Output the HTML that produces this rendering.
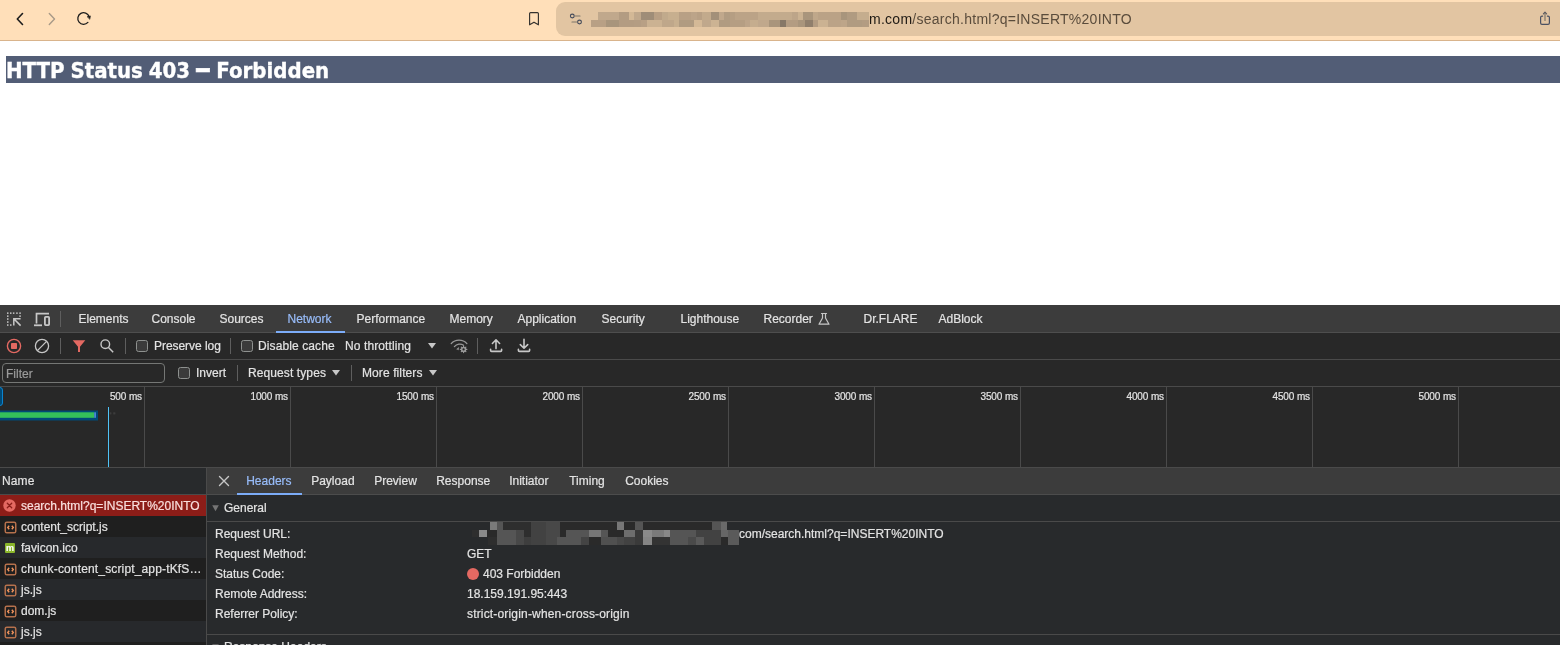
<!DOCTYPE html>
<html lang="en">
<head>
<meta charset="utf-8">
<title>HTTP Status 403 – Forbidden</title>
<style>
*{box-sizing:border-box;margin:0;padding:0}
html,body{width:1560px;height:645px;overflow:hidden;background:#fff}
body{position:relative;will-change:transform;font-family:"Liberation Sans",sans-serif;font-size:12px;color:#e3e3e3}
.abs{position:absolute}
/* browser chrome */
#chrome{position:absolute;left:0;top:0;width:1560px;height:41px;background:#ffdfb9;border-bottom:1px solid #d9b48c}
#urlbar{position:absolute;left:556px;top:2px;width:1030px;height:34px;background:#e2c5a2;border-radius:9px}
#url{position:absolute;left:869px;top:11px;font-size:14px;line-height:16px;color:#5a4c3c;white-space:nowrap;letter-spacing:0.26px}
#url b{font-weight:normal;color:#1f1a14}
/* page */
#h1{position:absolute;left:6px;top:56px;width:1554px;height:27px;background:#525d76;color:#fff;font-family:"DejaVu Sans Condensed","DejaVu Sans","Liberation Sans",sans-serif;font-weight:bold;font-size:22px;line-height:27px;white-space:nowrap}
#h1 span{display:inline-block;position:relative;top:1px;word-spacing:-1px;-webkit-text-stroke:0.35px #fff}
#h1 i{display:inline-block;font-style:normal;margin:0 2.3px 0 2.3px;transform:translateY(-2.5px) scale(1.74,1.35)}
/* devtools */
#dt{-webkit-text-stroke:0.2px;position:absolute;left:0;top:305px;width:1560px;height:340px;background:#282828;overflow:hidden}
#tabs{position:absolute;left:0;top:0;width:1560px;height:28px;background:#3c3c3c;border-bottom:1px solid #4e4e4e}
.tab{position:absolute;top:1px;height:27px;line-height:27px;font-size:12px;color:#e3e3e3;white-space:nowrap}
.tab.sel{color:#98bcf9}
#toolbar{position:absolute;left:0;top:28px;width:1560px;height:27px;background:#282828;border-bottom:1px solid #4a4a4a}
#filterbar{position:absolute;left:0;top:55px;width:1560px;height:27px;background:#282828;border-bottom:1px solid #4a4a4a}
.lbl{position:absolute;font-size:12px;line-height:14px;color:#e3e3e3;white-space:nowrap;letter-spacing:0.1px}
.cb{position:absolute;width:12px;height:12px;border:1px solid #8e918f;border-radius:2.5px;background:#3b3b3b}
.vsep{position:absolute;width:1px;height:16px;background:#5e5e5e}
#filter{position:absolute;left:2px;top:3px;width:163px;height:20px;border:1px solid #757775;border-radius:4px;background:#282828}
#filter span{position:absolute;left:3px;top:3px;font-size:12px;line-height:14px;color:#9a9a9a}
/* overview */
#ov{position:absolute;left:0;top:82px;width:1560px;height:80px;background:#282828}
.tick{position:absolute;top:0;width:1px;height:80px;background:#4a4a4a}
.tl{position:absolute;top:4px;letter-spacing:-0.12px;font-size:10px;line-height:12px;color:#e3e3e3;text-align:right;width:60px;white-space:nowrap}
/* lower */
#names{position:absolute;left:0;top:162px;width:206px;height:178px;background:#282828}
#nhead{position:absolute;left:0;top:0;width:206px;height:28px;background:#282a2c;border-top:1px solid #4a4a4a;border-bottom:1px solid #4a4a4a}
.row{position:absolute;left:0;width:206px;height:21px;white-space:nowrap;overflow:hidden}
.row span{position:absolute;left:21px;top:4px;font-size:12px;line-height:14px;color:#e3e3e3}
.row{background:#27292c}
.row.odd{background:#1f1f1f}
.row.sel{background:#8c1d18}
.row.sel span{color:#f9dedc}
#detail{position:absolute;left:206px;top:162px;width:1354px;height:178px;background:#282a2c;border-left:1px solid #4a4a4a}
#dtabs{position:absolute;left:0;top:0;width:1354px;height:28px;background:#3c3c3c;border-top:1px solid #4a4a4a;border-bottom:1px solid #4c4c4c}
.k{position:absolute;left:8px;font-size:12px;line-height:14px;color:#e3e3e3;white-space:nowrap}
.v{position:absolute;left:260px;font-size:12px;line-height:14px;color:#e3e3e3;white-space:nowrap}
</style>
</head>
<body>
<div id="chrome">
  <svg class="abs" style="left:0;top:0" width="120" height="40" viewBox="0 0 120 40" fill="none" stroke-linecap="round" stroke-linejoin="round">
    <path d="M22.5 13.5 L17.3 19 L22.5 24.5" stroke="#1c1c1c" stroke-width="1.6"/>
    <path d="M49.3 13.5 L54.5 19 L49.3 24.5" stroke="#a89a88" stroke-width="1.4"/>
    <path d="M89.1 16.6 A5.8 5.8 0 1 0 87.9 22.4" stroke="#1c1c1c" stroke-width="1.3"/>
    <path d="M87.4 16.6 L90.4 15.9 L89.9 19 Z" fill="#1c1c1c" stroke="#1c1c1c" stroke-width="0.6"/>
  </svg>
  <svg class="abs" style="left:524px;top:8px" width="20" height="22" viewBox="0 0 20 22" fill="none" stroke="#34312e" stroke-width="1.15" stroke-linejoin="round">
    <path d="M5.6 5.6 Q5.6 4.6 6.6 4.6 H13.4 Q14.4 4.6 14.4 5.6 V16.8 L10 14.2 L5.6 16.8 Z"/>
  </svg>
  <div id="urlbar"></div>
  <svg class="abs" style="left:566px;top:10px" width="20" height="18" viewBox="0 0 20 18" fill="none" stroke="#434a5a" stroke-width="1.1" stroke-linecap="round">
    <circle cx="6.3" cy="6" r="1.9"/><path d="M9.2 6 H14" stroke="#7d766b" stroke-width="1.2"/>
    <circle cx="13.5" cy="12" r="1.9"/><path d="M6 12 H10.6" stroke="#7d766b" stroke-width="1.2"/>
  </svg>
  <svg class="abs" style="left:0;top:0" width="1560" height="40" viewBox="0 0 1560 40" shape-rendering="crispEdges"><rect x="598.0" y="12" width="21.1" height="8" fill="#c0a88c"/><rect x="619.1" y="12" width="9.8" height="8" fill="#b39c82"/><rect x="628.9" y="12" width="5.1" height="8" fill="#d3b896"/><rect x="634.0" y="12" width="7.1" height="8" fill="#c0a88c"/><rect x="641.1" y="12" width="12.9" height="8" fill="#9f8d78"/><rect x="654.0" y="12" width="7.9" height="8" fill="#b89f84"/><rect x="661.9" y="12" width="6.3" height="8" fill="#c1aa8c"/><rect x="668.2" y="12" width="10.6" height="8" fill="#c7af8f"/><rect x="678.8" y="12" width="12.0" height="8" fill="#b8a085"/><rect x="690.8" y="12" width="6.2" height="8" fill="#bca489"/><rect x="697.0" y="12" width="5.1" height="8" fill="#b8a085"/><rect x="702.1" y="12" width="8.9" height="8" fill="#c2aa8c"/><rect x="711.0" y="12" width="7.9" height="8" fill="#a39079"/><rect x="718.9" y="12" width="5.0" height="8" fill="#c0a88c"/><rect x="723.9" y="12" width="6.3" height="8" fill="#b19c82"/><rect x="591.0" y="20" width="15.0" height="7" fill="#b8a085"/><rect x="606.0" y="20" width="13.1" height="7" fill="#a8957c"/><rect x="619.1" y="20" width="14.9" height="7" fill="#b39c82"/><rect x="634.0" y="20" width="7.1" height="7" fill="#b49d83"/><rect x="641.1" y="20" width="5.9" height="7" fill="#b8a085"/><rect x="647.0" y="20" width="14.9" height="7" fill="#cbb292"/><rect x="661.9" y="20" width="12.0" height="7" fill="#bfa78a"/><rect x="673.9" y="20" width="4.9" height="7" fill="#c7af8f"/><rect x="678.8" y="20" width="15.0" height="7" fill="#b09b81"/><rect x="693.8" y="20" width="8.3" height="7" fill="#d4b997"/><rect x="702.1" y="20" width="8.9" height="7" fill="#c0a88c"/><rect x="711.0" y="20" width="7.9" height="7" fill="#ccb393"/><rect x="718.9" y="20" width="11.3" height="7" fill="#b09b81"/><rect x="730.0" y="12" width="4.8" height="8" fill="#b59e83"/><rect x="734.8" y="12" width="23.1" height="8" fill="#bba387"/><rect x="757.9" y="12" width="34.1" height="8" fill="#c3ab8d"/><rect x="792.0" y="12" width="6.1" height="8" fill="#bda589"/><rect x="798.1" y="12" width="5.0" height="8" fill="#cbb292"/><rect x="803.1" y="12" width="9.8" height="8" fill="#a9957c"/><rect x="812.9" y="12" width="5.1" height="8" fill="#bfa78a"/><rect x="818.0" y="12" width="23.1" height="8" fill="#baa286"/><rect x="841.1" y="12" width="6.0" height="8" fill="#a8957c"/><rect x="847.1" y="12" width="9.8" height="8" fill="#b09b81"/><rect x="856.9" y="12" width="12.0" height="8" fill="#c5ad8e"/><rect x="730.0" y="20" width="14.9" height="7" fill="#b59e83"/><rect x="744.9" y="20" width="5.1" height="7" fill="#bca489"/><rect x="750.0" y="20" width="7.9" height="7" fill="#c5ad8e"/><rect x="757.9" y="20" width="11.0" height="7" fill="#c0a88c"/><rect x="768.9" y="20" width="11.1" height="7" fill="#a9957c"/><rect x="780.0" y="20" width="6.1" height="7" fill="#877867"/><rect x="786.1" y="20" width="12.0" height="7" fill="#b39c82"/><rect x="798.1" y="20" width="6.9" height="7" fill="#a9957c"/><rect x="805.0" y="20" width="7.9" height="7" fill="#907f6c"/><rect x="812.9" y="20" width="5.1" height="7" fill="#b39c82"/><rect x="818.0" y="20" width="9.9" height="7" fill="#cbb292"/><rect x="827.9" y="20" width="13.2" height="7" fill="#bba387"/><rect x="841.1" y="20" width="6.0" height="7" fill="#bda589"/><rect x="847.1" y="20" width="14.6" height="7" fill="#b09b81"/><rect x="861.7" y="20" width="7.2" height="7" fill="#b39c82"/></svg>
  <div id="url"><b>m.com</b>/search.html?q=INSERT%20INTO</div>
  <svg class="abs" style="left:1536px;top:9px" width="18" height="20" viewBox="0 0 18 20" fill="none" stroke="#4b5162" stroke-width="1.2" stroke-linecap="round" stroke-linejoin="round">
    <path d="M6.6 7.2 H6 Q4.6 7.2 4.6 8.6 V14 Q4.6 15.4 6 15.4 H12 Q13.4 15.4 13.4 14 V8.6 Q13.4 7.2 12 7.2 H11.4"/><path d="M9 11.4 V3.6" stroke="#7d766c"/><path d="M7.4 4.8 L9 3.2 L10.6 4.8" stroke="#5b5a60"/>
  </svg>
</div>

<div id="h1"><span>HTTP Status 403 <i>–</i> Forbidden</span></div>

<div id="dt">
  <div id="tabs">
    <svg class="abs" style="left:4px;top:4px" width="52" height="20" viewBox="0 0 52 20" fill="none" stroke="#c7c7c7" stroke-width="1.3">
      <g fill="#c7c7c7" stroke="none"><rect x="3.0" y="3.4" width="1.5" height="1.5"/><rect x="6.0" y="3.4" width="1.5" height="1.5"/><rect x="8.9" y="3.4" width="1.5" height="1.5"/><rect x="12.2" y="3.4" width="1.5" height="1.5"/><rect x="15.3" y="3.4" width="1.5" height="1.5"/><rect x="3.0" y="6.4" width="1.5" height="1.5"/><rect x="3.0" y="9.3" width="1.5" height="1.5"/><rect x="3.0" y="12.3" width="1.5" height="1.5"/><rect x="3.0" y="15.3" width="1.5" height="1.5"/><rect x="15.3" y="6.4" width="1.5" height="1.5"/><rect x="6.0" y="15.3" width="1.5" height="1.5"/></g>
      <path d="M16.6 16.6 L9.8 9.8 M9.8 16.6 V9.8 H16.6" stroke-width="1.5"/>
      <path d="M32.5 14.5 V4.6 H45" stroke-width="1.7"/><path d="M30 16.3 H38" stroke-width="1.8"/><rect x="40.9" y="7.9" width="4.2" height="8.2" rx="0.8" stroke-width="1.8"/>
    </svg>
    <div class="vsep" style="left:60px;top:6px"></div>
    <div class="tab" style="left:78.5px">Elements</div><div class="tab" style="left:151.5px">Console</div><div class="tab" style="left:219.5px">Sources</div><div class="tab sel" style="left:287.5px">Network</div><div class="tab" style="left:356.5px">Performance</div><div class="tab" style="left:449.5px">Memory</div><div class="tab" style="left:517.5px">Application</div><div class="tab" style="left:601.5px">Security</div><div class="tab" style="left:680.5px">Lighthouse</div><div class="tab" style="left:763.5px">Recorder</div><div class="tab" style="left:863.5px">Dr.FLARE</div><div class="tab" style="left:938.5px">AdBlock</div>
    <div class="abs" style="left:276px;top:25.5px;width:69px;height:2.5px;background:#7cacf8"></div>
    <svg class="abs" style="left:816px;top:6px" width="16" height="16" viewBox="0 0 16 16" fill="none" stroke="#c7c7c7" stroke-width="1.2" stroke-linejoin="round" stroke-linecap="round">
      <path d="M5.5 2.5 H10.5 M6.5 2.5 V7 L3 13.2 H13 L9.5 7 V2.5"/>
    </svg>
  </div>
  <div id="toolbar">
    <svg class="abs" style="left:4px;top:3px" width="120" height="20" viewBox="0 0 120 20" fill="none">
      <circle cx="10" cy="10" r="6.6" stroke="#e46962" stroke-width="1.4"/><rect x="7" y="7" width="6" height="6" rx="0.8" fill="#e46962"/>
      <circle cx="38" cy="10" r="6.6" stroke="#c7c7c7" stroke-width="1.3"/><path d="M33.4 14.6 L42.6 5.4" stroke="#c7c7c7" stroke-width="1.3"/>
      <path d="M68.7 4.3 H81.3 L76 10.8 V16 H74 V10.8 Z" fill="#e46962"/>
      <circle cx="101.3" cy="8.2" r="4.3" stroke="#c7c7c7" stroke-width="1.4"/><path d="M104.5 11.5 L109.2 16.2" stroke="#c7c7c7" stroke-width="1.5"/>
    </svg>
    <div class="vsep" style="left:60px;top:5px"></div>
    <div class="vsep" style="left:125px;top:5px"></div>
    <div class="cb" style="left:136px;top:7px"></div>
    <div class="lbl" style="left:154px;top:6px;letter-spacing:-0.05px">Preserve log</div>
    <div class="vsep" style="left:230px;top:5px"></div>
    <div class="cb" style="left:241px;top:7px"></div>
    <div class="lbl" style="left:258px;top:6px">Disable cache</div>
    <div class="lbl" style="left:345px;top:6px">No throttling</div>
    <svg class="abs" style="left:428px;top:10px" width="8" height="6" viewBox="0 0 8 6"><path d="M0 0 H8 L4.0 5.4 Z" fill="#c7c7c7"/></svg>
    <svg class="abs" style="left:449px;top:3px" width="22" height="20" viewBox="0 0 22 20" fill="none" stroke="#9a9a9a" stroke-width="1.3" stroke-linecap="round">
      <path d="M2.2 7.6 A10.5 10.5 0 0 1 17.9 7.6"/><path d="M5.4 10.6 A7 7 0 0 1 14.6 9.2"/><path d="M8 13 L9.6 11.6 V13.4 Z" fill="#9a9a9a" stroke-width="0.6"/>
      <circle cx="14.6" cy="13.4" r="1.9" stroke-width="1.5"/><path d="M14.6 10.2 V11 M14.6 15.8 V16.6 M11.4 13.4 H12.2 M17 13.4 H17.8 M12.3 11.1 L12.9 11.7 M16.3 15.1 L16.9 15.7 M12.3 15.7 L12.9 15.1 M16.3 11.7 L16.9 11.1" stroke-width="1.2"/>
    </svg>
    <div class="vsep" style="left:477px;top:5px"></div>
    <svg class="abs" style="left:486px;top:3px" width="50" height="20" viewBox="0 0 50 20" fill="none" stroke="#c7c7c7" stroke-width="1.6" stroke-linecap="round" stroke-linejoin="round">
      <path d="M10 12.6 V4.2 M6.4 7.5 L10 3.8 L13.6 7.5"/><path d="M4.6 13.2 V14.4 Q4.6 15.4 5.6 15.4 H14.6 Q15.6 15.4 15.6 14.4 V13.2"/>
      <path d="M38 3.2 V11.6 M34.3 8.6 L38 12.2 L41.7 8.6"/><path d="M32.4 13.2 V14.4 Q32.4 15.4 33.4 15.4 H42.6 Q43.6 15.4 43.6 14.4 V13.2"/>
    </svg>
  </div>
  <div id="filterbar">
    <div id="filter"><span>Filter</span></div>
    <div class="cb" style="left:178px;top:7px"></div>
    <div class="lbl" style="left:196px;top:6px;letter-spacing:0">Invert</div>
    <div class="vsep" style="left:237px;top:5px"></div>
    <div class="lbl" style="left:248px;top:6px">Request types</div>
    <svg class="abs" style="left:332px;top:10px" width="8" height="6" viewBox="0 0 8 6"><path d="M0 0 H8 L4.0 5.4 Z" fill="#c7c7c7"/></svg>
    <div class="vsep" style="left:351px;top:5px"></div>
    <div class="lbl" style="left:362px;top:6px">More filters</div>
    <svg class="abs" style="left:429px;top:10px" width="8" height="6" viewBox="0 0 8 6"><path d="M0 0 H8 L4.0 5.4 Z" fill="#c7c7c7"/></svg>
  </div>
  <div id="ov"><div class="tick" style="left:144px"></div><div class="tl" style="left:82px">500 ms</div><div class="tick" style="left:290px"></div><div class="tl" style="left:228px">1000 ms</div><div class="tick" style="left:436px"></div><div class="tl" style="left:374px">1500 ms</div><div class="tick" style="left:582px"></div><div class="tl" style="left:520px">2000 ms</div><div class="tick" style="left:728px"></div><div class="tl" style="left:666px">2500 ms</div><div class="tick" style="left:874px"></div><div class="tl" style="left:812px">3000 ms</div><div class="tick" style="left:1020px"></div><div class="tl" style="left:958px">3500 ms</div><div class="tick" style="left:1166px"></div><div class="tl" style="left:1104px">4000 ms</div><div class="tick" style="left:1312px"></div><div class="tl" style="left:1250px">4500 ms</div><div class="tick" style="left:1458px"></div><div class="tl" style="left:1396px">5000 ms</div><div class="abs" style="left:-3px;top:0;width:6px;height:19px;border:1px solid #0b84d0;border-radius:3px;background:#004a77"></div>
    <svg class="abs" style="left:0;top:20px" width="120" height="16" viewBox="0 0 120 16">
      <rect x="0" y="3.5" width="98" height="10" fill="#004a77"/><rect x="0" y="5.3" width="94.2" height="5.5" fill="#34c05a"/><rect x="94.2" y="5.3" width="1.8" height="5.5" fill="#4a86d8"/>
      <rect x="109.8" y="5.3" width="1.6" height="2.1" fill="#3c3c3c"/><rect x="113.2" y="5.3" width="2.2" height="2.1" fill="#3c3c3c"/>
    </svg>
    <div class="abs" style="left:108px;top:20px;width:1px;height:60px;background:#4fc3f7"></div>
    
  </div>
  <div id="names"><div id="nhead"><div class="lbl" style="left:2px;top:6px">Name</div></div><div class="row sel" style="top:28px"><svg class="abs" style="left:2.2px;top:3px" width="15" height="15" viewBox="0 0 15 15"><circle cx="7.5" cy="7.5" r="6.2" fill="#e46962"/><path d="M5.3 5.3 L9.7 9.7 M9.7 5.3 L5.3 9.7" stroke="#8c1d18" stroke-width="1.3" stroke-linecap="round"/></svg><span>search.html?q=INSERT%20INTO</span></div><div class="row odd" style="top:49px"><svg class="abs" style="left:3.7px;top:4.8px" width="13" height="13" viewBox="0 0 13 13" fill="none"><rect x="1.25" y="1.25" width="10.5" height="10.5" rx="1.6" stroke="#b5714c" stroke-width="1.5"/><path d="M5.2 4.7 L3.7 6.5 L5.2 8.3 M7.8 4.7 L9.3 6.5 L7.8 8.3" stroke="#f0935c" stroke-width="1.4"/></svg><span>content_script.js</span></div><div class="row" style="top:70px"><div class="abs" style="left:5px;top:6px;width:10px;height:10px;background:#8ab52a;border-radius:1px;color:#fff;font-size:9px;line-height:10px;font-weight:bold;text-align:center">m</div><span>favicon.ico</span></div><div class="row odd" style="top:91px"><svg class="abs" style="left:3.7px;top:4.8px" width="13" height="13" viewBox="0 0 13 13" fill="none"><rect x="1.25" y="1.25" width="10.5" height="10.5" rx="1.6" stroke="#b5714c" stroke-width="1.5"/><path d="M5.2 4.7 L3.7 6.5 L5.2 8.3 M7.8 4.7 L9.3 6.5 L7.8 8.3" stroke="#f0935c" stroke-width="1.4"/></svg><span style="letter-spacing:0.15px">chunk-content_script_app-tKfS…</span></div><div class="row" style="top:112px"><svg class="abs" style="left:3.7px;top:4.8px" width="13" height="13" viewBox="0 0 13 13" fill="none"><rect x="1.25" y="1.25" width="10.5" height="10.5" rx="1.6" stroke="#b5714c" stroke-width="1.5"/><path d="M5.2 4.7 L3.7 6.5 L5.2 8.3 M7.8 4.7 L9.3 6.5 L7.8 8.3" stroke="#f0935c" stroke-width="1.4"/></svg><span>js.js</span></div><div class="row odd" style="top:133px"><svg class="abs" style="left:3.7px;top:4.8px" width="13" height="13" viewBox="0 0 13 13" fill="none"><rect x="1.25" y="1.25" width="10.5" height="10.5" rx="1.6" stroke="#b5714c" stroke-width="1.5"/><path d="M5.2 4.7 L3.7 6.5 L5.2 8.3 M7.8 4.7 L9.3 6.5 L7.8 8.3" stroke="#f0935c" stroke-width="1.4"/></svg><span>dom.js</span></div><div class="row" style="top:154px"><svg class="abs" style="left:3.7px;top:4.8px" width="13" height="13" viewBox="0 0 13 13" fill="none"><rect x="1.25" y="1.25" width="10.5" height="10.5" rx="1.6" stroke="#b5714c" stroke-width="1.5"/><path d="M5.2 4.7 L3.7 6.5 L5.2 8.3 M7.8 4.7 L9.3 6.5 L7.8 8.3" stroke="#f0935c" stroke-width="1.4"/></svg><span>js.js</span></div><div class="row odd" style="top:175px"></div></div>
  <div id="detail"><div id="dtabs"><svg class="abs" style="left:10px;top:6px" width="14" height="14" viewBox="0 0 14 14" stroke="#c7c7c7" stroke-width="1.4" stroke-linecap="round"><path d="M2.5 2.5 L11.5 11.5 M11.5 2.5 L2.5 11.5"/></svg><div class="tab sel" style="left:39.2px;top:0">Headers</div><div class="tab" style="left:104.2px;top:0">Payload</div><div class="tab" style="left:167.2px;top:0">Preview</div><div class="tab" style="left:229.2px;top:0">Response</div><div class="tab" style="left:302.2px;top:0">Initiator</div><div class="tab" style="left:362.2px;top:0">Timing</div><div class="tab" style="left:418.2px;top:0">Cookies</div><div class="abs" style="left:30px;top:24.5px;width:65px;height:2.5px;background:#7cacf8"></div></div><div class="abs" style="left:0;top:28px;width:1354px;height:27px;border-bottom:1px solid #4a4a4a"></div>
    <svg class="abs" style="left:5.2px;top:38.3px" width="7" height="7" viewBox="0 0 7 7"><path d="M0.2 0.3 H6.8 L3.5 6.3 Z" fill="#757575"/></svg>
    <div class="k" style="left:17px;top:34px">General</div>
    <svg class="abs" style="left:-207px;top:-467px" width="1560" height="645" viewBox="0 0 1560 645" shape-rendering="crispEdges"><rect x="489.8" y="522" width="7.3" height="8" fill="#7a7a7a"/><rect x="497.1" y="522" width="5.6" height="8" fill="#555"/><rect x="502.7" y="522" width="28.5" height="8" fill="#2e2e2e"/><rect x="531.2" y="522" width="14.4" height="8" fill="#424242"/><rect x="545.6" y="522" width="14.4" height="8" fill="#484848"/><rect x="560.0" y="522" width="56.7" height="8" fill="#2a2a2a"/><rect x="616.7" y="522" width="7.1" height="8" fill="#777"/><rect x="623.8" y="522" width="11.2" height="8" fill="#2a2a2a"/><rect x="635.0" y="522" width="7.7" height="8" fill="#555"/><rect x="642.7" y="522" width="69.2" height="8" fill="#2a2a2a"/><rect x="711.9" y="522" width="8.7" height="8" fill="#555"/><rect x="720.6" y="522" width="6.7" height="8" fill="#6a6a6a"/><rect x="471.5" y="530" width="7.7" height="7" fill="#2e2e2e"/><rect x="479.2" y="530" width="7.7" height="7" fill="#8a8a8a"/><rect x="486.9" y="530" width="9.6" height="7" fill="#2a2a2a"/><rect x="496.5" y="530" width="19.3" height="7" fill="#555"/><rect x="515.8" y="530" width="8.6" height="7" fill="#484848"/><rect x="524.4" y="530" width="6.8" height="7" fill="#2e2e2e"/><rect x="531.2" y="530" width="14.4" height="7" fill="#424242"/><rect x="545.6" y="530" width="14.4" height="7" fill="#484848"/><rect x="560.0" y="530" width="5.8" height="7" fill="#2a2a2a"/><rect x="565.8" y="530" width="23.0" height="7" fill="#555"/><rect x="588.8" y="530" width="12.5" height="7" fill="#777"/><rect x="601.3" y="530" width="6.8" height="7" fill="#555"/><rect x="608.1" y="530" width="15.4" height="7" fill="#2a2a2a"/><rect x="623.5" y="530" width="11.5" height="7" fill="#6e6e6e"/><rect x="635.0" y="530" width="7.7" height="7" fill="#3a3a3a"/><rect x="642.7" y="530" width="9.6" height="7" fill="#8a8a8a"/><rect x="652.3" y="530" width="11.5" height="7" fill="#7a7a7a"/><rect x="663.8" y="530" width="5.8" height="7" fill="#888"/><rect x="669.6" y="530" width="26.0" height="7" fill="#555"/><rect x="695.6" y="530" width="25.0" height="7" fill="#424242"/><rect x="720.6" y="530" width="7.7" height="7" fill="#666"/><rect x="728.3" y="530" width="10.5" height="7" fill="#5a5a5a"/><rect x="487.9" y="537" width="8.6" height="8" fill="#2e2e2e"/><rect x="496.5" y="537" width="19.3" height="8" fill="#555"/><rect x="515.8" y="537" width="8.6" height="8" fill="#484848"/><rect x="524.4" y="537" width="6.8" height="8" fill="#3e3e3e"/><rect x="531.2" y="537" width="14.4" height="8" fill="#424242"/><rect x="545.6" y="537" width="11.5" height="8" fill="#484848"/><rect x="557.1" y="537" width="24.1" height="8" fill="#555"/><rect x="581.2" y="537" width="7.6" height="8" fill="#444"/><rect x="588.8" y="537" width="12.5" height="8" fill="#2a2a2a"/><rect x="601.3" y="537" width="15.4" height="8" fill="#505050"/><rect x="616.7" y="537" width="7.1" height="8" fill="#484848"/><rect x="623.8" y="537" width="11.2" height="8" fill="#424242"/><rect x="635.0" y="537" width="7.7" height="8" fill="#3a3a3a"/><rect x="642.7" y="537" width="9.6" height="8" fill="#858585"/><rect x="652.3" y="537" width="17.3" height="8" fill="#333"/><rect x="669.6" y="537" width="18.3" height="8" fill="#555"/><rect x="687.9" y="537" width="7.7" height="8" fill="#4a4a4a"/><rect x="695.6" y="537" width="8.6" height="8" fill="#5a5a5a"/><rect x="704.2" y="537" width="16.4" height="8" fill="#424242"/><rect x="720.6" y="537" width="7.7" height="8" fill="#2a2a2a"/><rect x="728.3" y="537" width="10.5" height="8" fill="#5a5a5a"/></svg>
    <div class="k" style="top:60px">Request URL:</div>
    <div class="v" style="top:60px;left:532px">com/search.html?q=INSERT%20INTO</div>
    <div class="k" style="top:80px">Request Method:</div><div class="v" style="top:80px">GET</div>
    <div class="k" style="top:100px">Status Code:</div>
    <div class="abs" style="left:260px;top:101px;width:12px;height:12px;border-radius:6px;background:#e46962"></div>
    <div class="v" style="top:100px;left:276px">403 Forbidden</div>
    <div class="k" style="top:120px">Remote Address:</div><div class="v" style="top:120px">18.159.191.95:443</div>
    <div class="k" style="top:140px">Referrer Policy:</div><div class="v" style="top:140px;letter-spacing:0.17px">strict-origin-when-cross-origin</div>
    <div class="abs" style="left:0;top:167px;width:1354px;height:1px;background:#4a4a4a"></div>
    <svg class="abs" style="left:5.2px;top:176.8px" width="7" height="7" viewBox="0 0 7 7"><path d="M0.2 0.3 H6.8 L3.5 6.3 Z" fill="#757575"/></svg>
    <div class="k" style="left:17px;top:173px">Response Headers</div>
  </div>
</div>
</body>
</html>
